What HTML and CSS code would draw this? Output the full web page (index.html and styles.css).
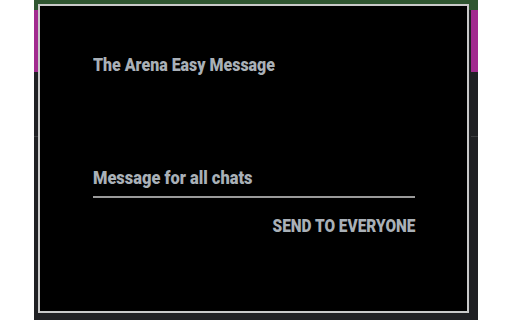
FILE: index.html
```html
<!DOCTYPE html>
<html>
<head>
<meta charset="utf-8">
<link rel="stylesheet" href="styles.css">
</head>
<body>
<div class="stage">
  <div class="band"></div>
  <div class="side side-left"><div class="mag"></div><div class="rule"></div></div>
  <div class="side side-right"><div class="mag"></div><div class="rule"></div></div>
  <div class="popup">
    <div class="content">
      <h1 class="title"><span class="narrow narrow-title">The Arena Easy Message</span></h1>
      <div class="field"><span class="narrow narrow-field">Message for all chats</span></div>
      <button class="send"><span class="narrow narrow-send">Send to everyone</span></button>
    </div>
  </div>
</div>
</body>
</html>
```
FILE: styles.css
```css
html, body { margin: 0; padding: 0; background: #ffffff; }
body { width: 512px; height: 320px; overflow: hidden; }
.stage {
  position: relative;
  margin-left: 34px;
  width: 444px;
  height: 320px;
  background: #202124;
}
.band {
  position: absolute; left: 0; top: 0; width: 444px; height: 10px;
  background: #2f5530;
}
.side { position: absolute; top: 10px; width: 4px; height: 310px; }
.side-left { left: 0; }
.side-right { right: 0; width: 7px; }
.mag { height: 62px; background: #a22b8f; }
.rule { margin-top: 64px; height: 1px; background: #3c3d40; }
.popup {
  position: absolute;
  left: 4px; top: 4px;
  width: 427px; height: 305px;
  border: 2px solid #c9c9c9;
  background: #000000;
}
.content {
  display: flex;
  flex-direction: column;
  width: 322px;
  padding: 48px 0 0 53px;
  font-family: Roboto, "DejaVu Sans Condensed", sans-serif;
  font-weight: 900;
  font-size: 19px;
  line-height: 22px;
  color: #a9b0b7;
}
.narrow { display: inline-block; white-space: nowrap; }
.narrow-title { transform: scaleX(0.84); transform-origin: left center; }
.narrow-field { transform: scaleX(0.865); transform-origin: left center; }
.narrow-send { transform: scaleX(0.81); transform-origin: right center; }
.title {
  margin: 0;
  font-size: 19px;
  line-height: 22px;
  font-weight: 900;
}
.field {
  margin-top: 91px;
  height: 24px;
  padding: 0 0 5px 0;
  border-bottom: 2px solid #9a9a9a;
  white-space: nowrap;
}
.send {
  align-self: flex-end;
  margin-top: 17px;
  padding: 0;
  border: none;
  background: transparent;
  font-family: inherit;
  font-weight: 900;
  font-size: 19px;
  line-height: 22px;
  text-transform: uppercase;
  color: #a9b0b7;
}
```
